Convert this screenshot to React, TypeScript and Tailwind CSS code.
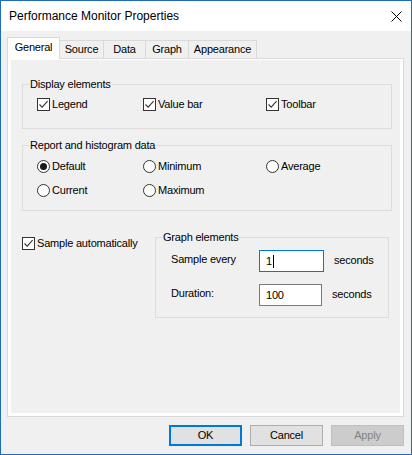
import React from "react";

function CheckBox({ checked = true }: { checked?: boolean }) {
  return (
    <span className="w-[13px] h-[13px] border border-[#333333] bg-white flex items-center justify-center shrink-0">
      {checked && (
        <svg width="11" height="11" viewBox="0 0 11 11">
          <path d="M1.5 5.5 L4.2 8.2 L9.6 2.2" stroke="#333333" strokeWidth="1.1" fill="none" />
        </svg>
      )}
    </span>
  );
}

function Radio({ checked = false }: { checked?: boolean }) {
  return (
    <span className="w-[13px] h-[13px] rounded-full border border-[#333333] bg-white flex items-center justify-center shrink-0">
      {checked && <span className="w-[7px] h-[7px] rounded-full bg-[#1a1a1a]" />}
    </span>
  );
}

function Check({ label, className = "" }: { label: string; className?: string }) {
  return (
    <div className={"flex items-center h-[13px] " + className}>
      <CheckBox />
      <span className="ml-[2px] leading-[13px]">{label}</span>
    </div>
  );
}

function Opt({ label, checked = false, className = "" }: { label: string; checked?: boolean; className?: string }) {
  return (
    <div className={"flex items-center h-[13px] " + className}>
      <Radio checked={checked} />
      <span className="ml-[2px] leading-[13px]">{label}</span>
    </div>
  );
}

export default function App() {
  const tabs = [
    { name: "Source", w: "w-[44px]" },
    { name: "Data", w: "w-[42px]" },
    { name: "Graph", w: "w-[43px]" },
    { name: "Appearance", w: "w-[68px]" },
  ];
  return (
    <div className="w-[412px] h-[455px] border border-[#1f6bb5] bg-[#f0f0f0] flex flex-col font-['Liberation_Sans',Arial,sans-serif] text-black text-[11px] tracking-[-0.2px] overflow-hidden">
      {/* Title bar */}
      <div className="h-[30px] bg-white flex items-center pl-[8px] pr-[9px] shrink-0">
        <span className="text-[12px] tracking-normal flex-1">Performance Monitor Properties</span>
        <svg width="11" height="11" viewBox="0 0 11 11" className="mt-[1px]">
          <path d="M0.5 0.5 L10.5 10.5 M10.5 0.5 L0.5 10.5" stroke="#000" strokeWidth="1" fill="none" />
        </svg>
      </div>

      {/* Body */}
      <div className="flex-1 flex flex-col pt-[6px] pl-[6px] pr-[7px]">
        {/* Tabs */}
        <div className="flex items-end h-[21px] relative z-10">
          <div className="w-[53px] h-[22px] mb-[-1px] bg-white border border-b-0 border-[#d9d9d9] flex items-center justify-center pb-[2px]">
            General
          </div>
          {tabs.map((t) => (
            <div
              key={t.name}
              className={t.w + " h-[18px] border-t border-r border-[#d9d9d9] flex items-center justify-center"}
            >
              {t.name}
            </div>
          ))}
        </div>

        {/* Panel */}
        <div className="h-[359px] border border-[#d9d9d9] bg-white pt-[1px] px-[3px] pb-[3px] flex flex-col">
          <div className="flex-1 bg-[#f0f0f0] flex flex-col pl-[11px] pr-[8px] pt-[16px]">
            {/* Display elements */}
            <fieldset className="border border-[#dcdcdc] p-0 m-0">
              <legend className="ml-[6px] px-[1px] leading-[16px]">Display elements</legend>
              <div className="flex pt-[6px] pb-[17px] pl-[14px]">
                <Check label="Legend" className="w-[106px]" />
                <Check label="Value bar" className="w-[123px]" />
                <Check label="Toolbar" />
              </div>
            </fieldset>

            {/* Report and histogram data */}
            <fieldset className="border border-[#dcdcdc] p-0 m-0 mt-[8px]">
              <legend className="ml-[6px] px-[1px] leading-[16px]">Report and histogram data</legend>
              <div className="flex flex-col gap-[11px] pt-[7px] pb-[13px] pl-[14px]">
                <div className="flex">
                  <Opt label="Default" checked className="w-[106px]" />
                  <Opt label="Minimum" className="w-[123px]" />
                  <Opt label="Average" />
                </div>
                <div className="flex">
                  <Opt label="Current" className="w-[106px]" />
                  <Opt label="Maximum" />
                </div>
              </div>
            </fieldset>

            {/* Bottom row */}
            <div className="flex mt-[18px]">
              <div className="w-[133px] pt-[8px]">
                <Check label="Sample automatically" />
              </div>
              <fieldset className="w-[234px] border border-[#dcdcdc] p-0 m-0">
                <legend className="ml-[6px] px-[1px] leading-[16px]">Graph elements</legend>
                <div className="flex flex-col gap-[12px] pt-[5px] pb-[11px] pl-[15px]">
                  <div className="flex items-center h-[22px]">
                    <span className="w-[88px] -mt-[3px]">Sample every</span>
                    <div className="w-[65px] h-[22px] border border-[#0078d7] bg-white flex items-center pl-[6px]">
                      <span>1</span>
                      <span className="w-[1px] h-[13px] bg-black ml-[1px]" />
                    </div>
                    <span className="ml-[10px] -mt-[1px]">seconds</span>
                  </div>
                  <div className="flex items-center h-[22px]">
                    <span className="w-[88px] -mt-[3px]">Duration:</span>
                    <div className="w-[63px] h-[22px] border border-[#7a7a7a] bg-white flex items-center pl-[6px]">
                      <span>100</span>
                    </div>
                    <span className="ml-[10px] -mt-[1px]">seconds</span>
                  </div>
                </div>
              </fieldset>
            </div>
          </div>
        </div>

        {/* Buttons */}
        <div className="flex justify-end gap-[8px] mt-[8px]">
          <button className="w-[73px] h-[21px] border-2 border-[#0078d7] bg-[#e1e1e1] flex items-center justify-center">
            OK
          </button>
          <button className="w-[73px] h-[21px] border border-[#adadad] bg-[#e1e1e1] flex items-center justify-center">
            Cancel
          </button>
          <button className="w-[73px] h-[21px] border border-[#bfbfbf] bg-[#cccccc] text-[#838383] flex items-center justify-center">
            Apply
          </button>
        </div>
      </div>
    </div>
  );
}
